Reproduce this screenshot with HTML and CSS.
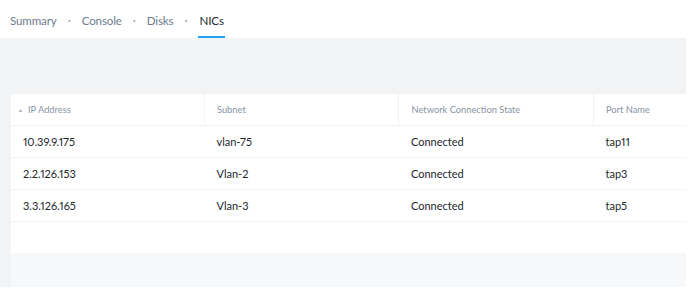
FILE: index.html
```
<!DOCTYPE html>
<html lang="en">
  <head>
    <meta charset="UTF-8" />
    <title>VM Details - NICs</title>
    <link rel="stylesheet" href="styles.css">
  </head>
  <body>
    <div class="tabs">
      <span class="tab">Summary</span>
      <span class="sep">·</span>
      <span class="tab">Console</span>
      <span class="sep">·</span>
      <span class="tab">Disks</span>
      <span class="sep">·</span>
      <span class="tab active">NICs</span>
    </div>
    <div class="content">
      <div class="card">
        <table class="nics">
          <thead>
            <tr>
              <th><span class="caret">&#9650;</span>IP Address</th>
              <th>Subnet</th>
              <th>Network Connection State</th>
              <th>Port Name</th>
            </tr>
          </thead>
          <tbody>
            <tr>
              <td>10.39.9.175</td>
              <td>vlan-75</td>
              <td>Connected</td>
              <td>tap11</td>
            </tr>
            <tr>
              <td>2.2.126.153</td>
              <td>Vlan-2</td>
              <td>Connected</td>
              <td>tap3</td>
            </tr>
            <tr>
              <td>3.3.126.165</td>
              <td>Vlan-3</td>
              <td>Connected</td>
              <td>tap5</td>
            </tr>
          </tbody>
        </table>
        <div class="empty"></div>
        <div class="card-footer"></div>
      </div>
    </div>
  </body>
</html>
```

FILE: styles.css
```
body {
  font-family: Lato, "Open Sans", sans-serif;
  font-variant-numeric: proportional-nums;
  margin: 0;
  width: 688px;
  height: 288px;
  overflow: hidden;
  background-color: white;
}
.tabs {
  height: 38px;
  display: flex;
  align-items: center;
  padding-left: 10px;
  font-size: 11.6px;
  letter-spacing: -0.15px;
  color: #6e7c8f;
  box-sizing: border-box;
}
.tab {
  height: 38px;
  line-height: 41px;
  box-sizing: border-box;
}
.tab.active {
  color: #22272e;
  border-bottom: 2px solid #22a5f7;
  padding: 0 1px 0 2px;
  margin-left: -1px;
}
.sep {
  color: #a8b2be;
  margin: 0 11px;
  font-weight: bold;
}
.content {
  background-color: #f2f3f5;
  width: 686px;
  height: 249px;
  padding: 56px 0 0 11px;
  box-sizing: border-box;
  overflow: hidden;
}
.card {
  background-color: white;
  width: 677px;
  height: 193px;
  display: flex;
  flex-direction: column;
}
.nics {
  width: 777px;
  border-collapse: collapse;
  table-layout: fixed;
}
.nics th {
  height: 31px;
  text-align: left;
  font-weight: normal;
  font-size: 9.3px;
  color: #8794a5;
  padding: 0 12px;
  border-bottom: 1px solid #f0f2f4;
  border-left: 1px solid #f0f2f4;
  width: 194px;
  box-sizing: border-box;
}
.nics th:first-child {
  border-left: none;
  padding-left: 7px;
  width: 193px;
}
.caret {
  font-size: 5px;
  color: #a3adb9;
  margin-right: 5px;
  position: relative;
  top: -1px;
}
.nics td {
  height: 32px;
  box-sizing: border-box;
  font-size: 11px;
  color: #22272e;
  padding: 1px 12px 0;
  border-bottom: 1px solid #f0f2f4;
}
.empty {
  flex: 1;
}
.card-footer {
  height: 34px;
  background-color: #f7f8fa;
}
```
